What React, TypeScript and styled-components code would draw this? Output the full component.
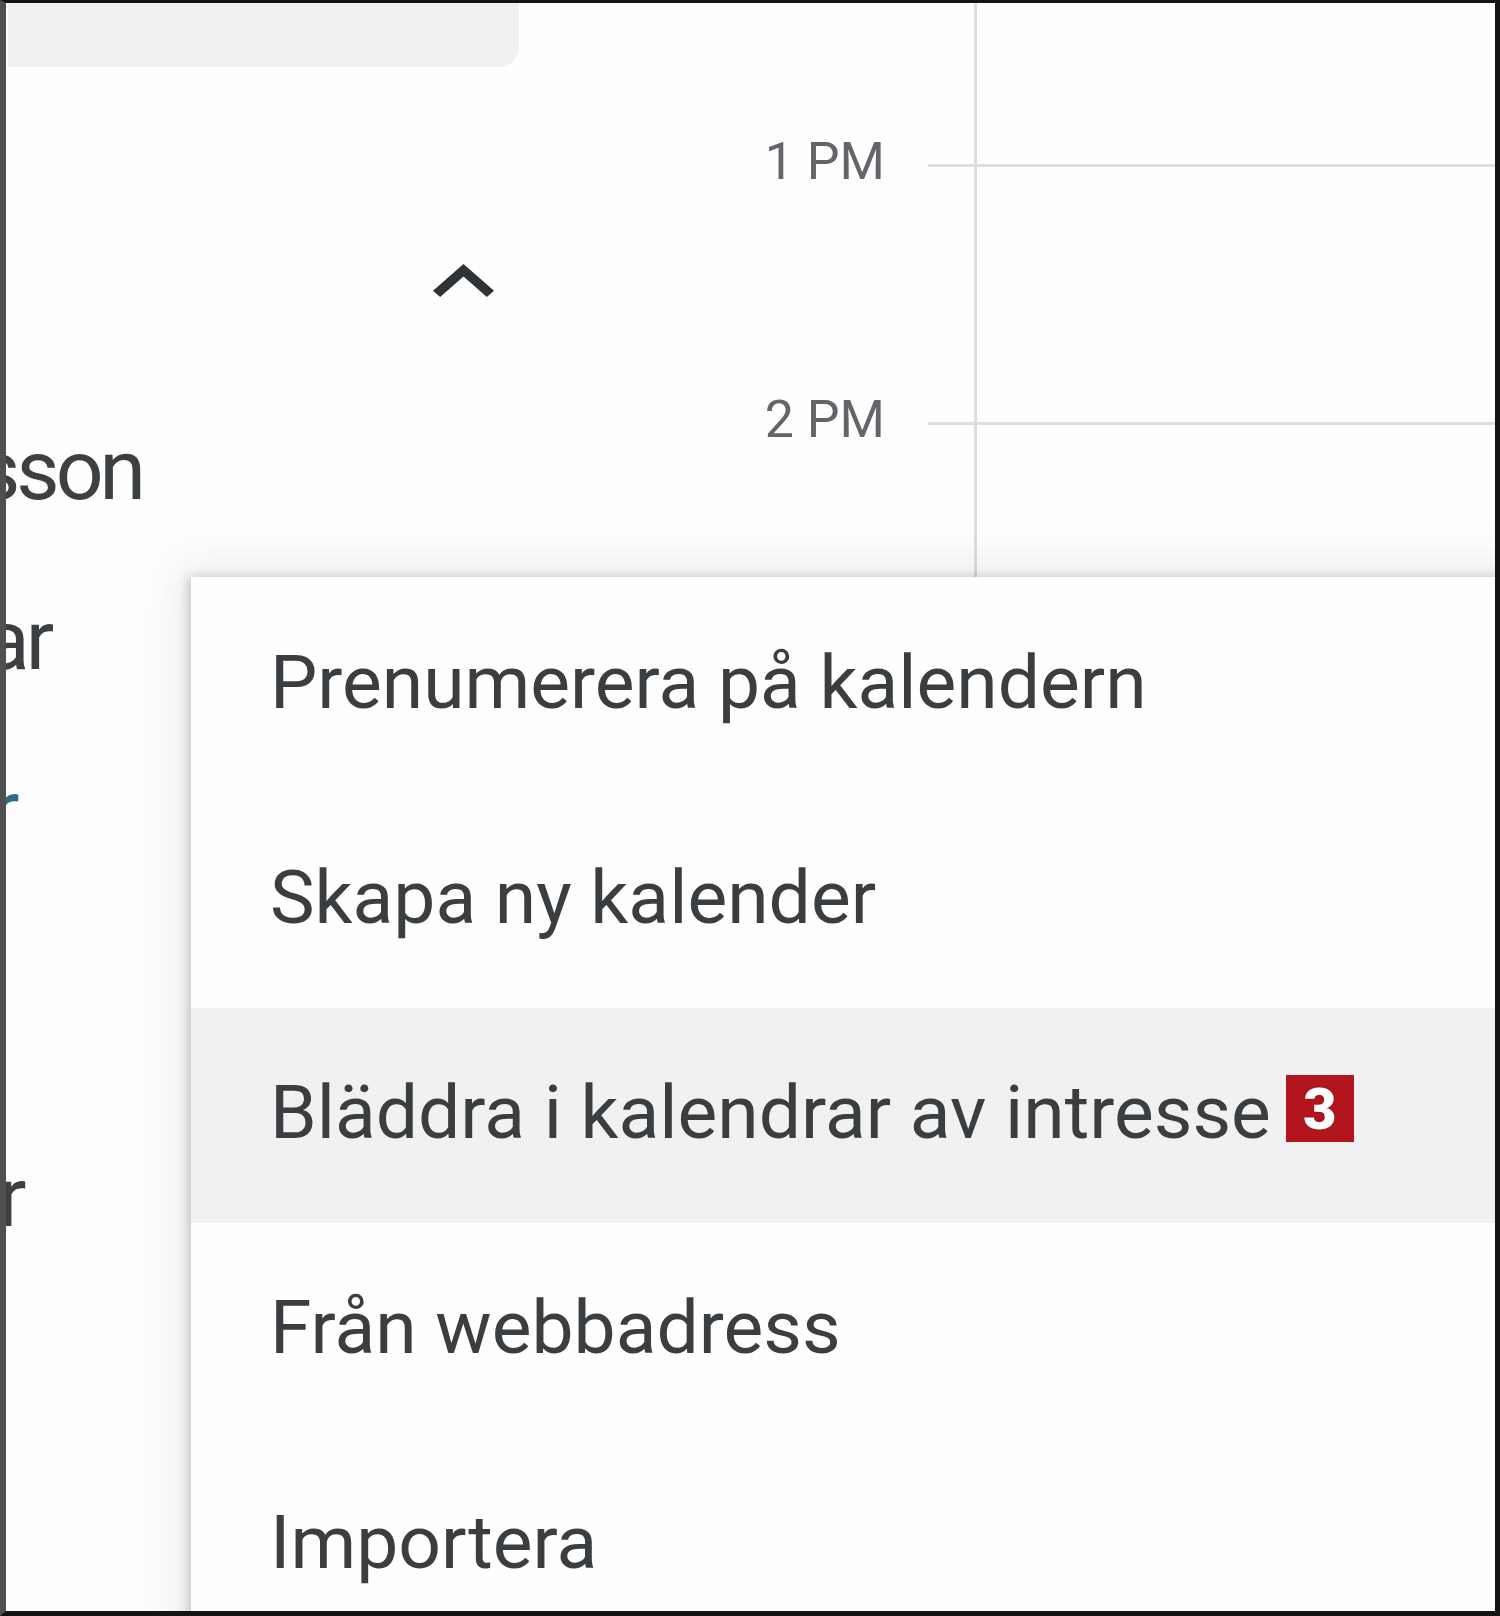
import React from 'react';
import styled, { createGlobalStyle } from 'styled-components';

const GlobalStyle = createGlobalStyle`
  html, body {
    margin: 0;
    padding: 0;
    background: #fefefe;
  }
  body {
    font-family: Roboto, "Liberation Sans", Arial, sans-serif;
  }
`;

const Frame = styled.div`
  position: relative;
  box-sizing: border-box;
  width: 1500px;
  height: 1616px;
  display: flex;
  overflow: hidden;
  background: #fefefe;
  border-top: 3px solid #141414;
  border-left: 6px solid #4f4f4f;
  border-right: 5px solid #141414;
  border-bottom: 5px solid #141414;
`;

const Sidebar = styled.aside`
  width: 694px;
  flex: none;
  display: flex;
  flex-direction: column;
  overflow: hidden;
`;

const SearchBox = styled.div`
  margin-left: 2px;
  width: 511px;
  height: 64px;
  flex: none;
  background: #f0f1f1;
  border-bottom-right-radius: 20px;
`;

const SectionHeader = styled.div`
  height: 319px;
  flex: none;
  box-sizing: border-box;
  padding: 107px 0 0 427px;
  display: flex;
  align-items: center;
`;

const Chevron = styled.svg`
  width: 61px;
  height: 33px;
  fill: #2f3336;
`;

const CalendarItem = styled.div<{ $shift: number; $gap?: number; $color?: string }>`
  height: 170px;
  flex: none;
  margin-top: ${p => p.$gap || 0}px;
  margin-left: ${p => p.$shift}px;
  font-size: 84px;
  letter-spacing: -4px;
  line-height: 170px;
  white-space: nowrap;
  color: ${p => p.$color || '#3c4043'};
`;

const Main = styled.main`
  flex: 1;
  display: flex;
`;

const Gutter = styled.div`
  width: 228px;
  flex: none;
  box-sizing: border-box;
  padding: 129px 43px 0 0;
  text-align: right;
`;

const TimeLabel = styled.div`
  height: 258px;
  font-size: 52px;
  line-height: 60px;
  color: #62666a;
`;

const GridArea = styled.div`
  flex: 1;
  display: flex;
`;

const TickColumn = styled.div`
  width: 46px;
  flex: none;
  padding-top: 161px;
`;

const DayColumn = styled.div`
  flex: 1;
  padding-top: 161px;
  border-left: 3px solid #dadfdf;
`;

const HourRow = styled.div`
  height: 258px;
  box-sizing: border-box;
  border-top: 3px solid #dadfdf;
`;

const Menu = styled.ul`
  position: absolute;
  left: 185px;
  top: 574px;
  width: 1400px;
  height: 1100px;
  margin: 0;
  padding: 1px 0 0;
  list-style: none;
  background: #fefefe;
  box-shadow: 0 0 44px 12px rgba(60, 64, 67, 0.1), -3px 0 10px rgba(60, 64, 67, 0.24);
`;

const MenuItem = styled.li<{ $active?: boolean }>`
  height: 215px;
  box-sizing: border-box;
  display: flex;
  align-items: center;
  padding: 0 0 7px 79px;
  font-size: 75px;
  color: #3a3e41;
  white-space: nowrap;
  background: ${p => (p.$active ? '#f1f1f1' : 'transparent')};
`;

const Badge = styled.span`
  display: inline-flex;
  align-items: center;
  justify-content: center;
  width: 68px;
  height: 67px;
  margin: 0 0 7px 15px;
  background: #b3151d;
  color: #fff;
  font-size: 58px;
  font-weight: 900;
  line-height: 1;
  text-shadow: 0 0 2px rgba(60, 0, 0, 0.6);
`;

// only the labels above the menu are visible
const labels = ['1 PM', '2 PM'];
const hours = ['1 PM', '2 PM', '3 PM', '4 PM', '5 PM', '6 PM'];

const menuItems = [
  'Prenumerera på kalendern',
  'Skapa ny kalender',
  'Bläddra i kalendrar av intresse',
  'Från webbadress',
  'Importera',
];

export default function App() {
  return (
    <>
      <GlobalStyle />
      <Frame>
        <Sidebar>
          <SearchBox />
          <SectionHeader>
            <Chevron viewBox="6 8 12 7.41" preserveAspectRatio="none">
              <path d="M12 8l-6 6 1.41 1.41L12 10.83l4.59 4.58L18 14z" />
            </Chevron>
          </SectionHeader>
          <CalendarItem $shift={-29}>sson</CalendarItem>
          <CalendarItem $shift={-22}>ar</CalendarItem>
          <CalendarItem $shift={-15} $color="#2f6a86">r</CalendarItem>
          <CalendarItem $shift={-8} $gap={217}>r</CalendarItem>
        </Sidebar>
        <Main>
          <Gutter>
            {labels.map(h => (
              <TimeLabel key={h}>{h}</TimeLabel>
            ))}
          </Gutter>
          <GridArea>
            <TickColumn>
              {hours.map(h => (
                <HourRow key={h} />
              ))}
            </TickColumn>
            <DayColumn>
              {hours.map(h => (
                <HourRow key={h} />
              ))}
            </DayColumn>
          </GridArea>
        </Main>
        <Menu>
          {menuItems.map((item, i) => (
            <MenuItem key={item} $active={i === 2}>
              {item}
              {i === 2 && <Badge>3</Badge>}
            </MenuItem>
          ))}
        </Menu>
      </Frame>
    </>
  );
}
